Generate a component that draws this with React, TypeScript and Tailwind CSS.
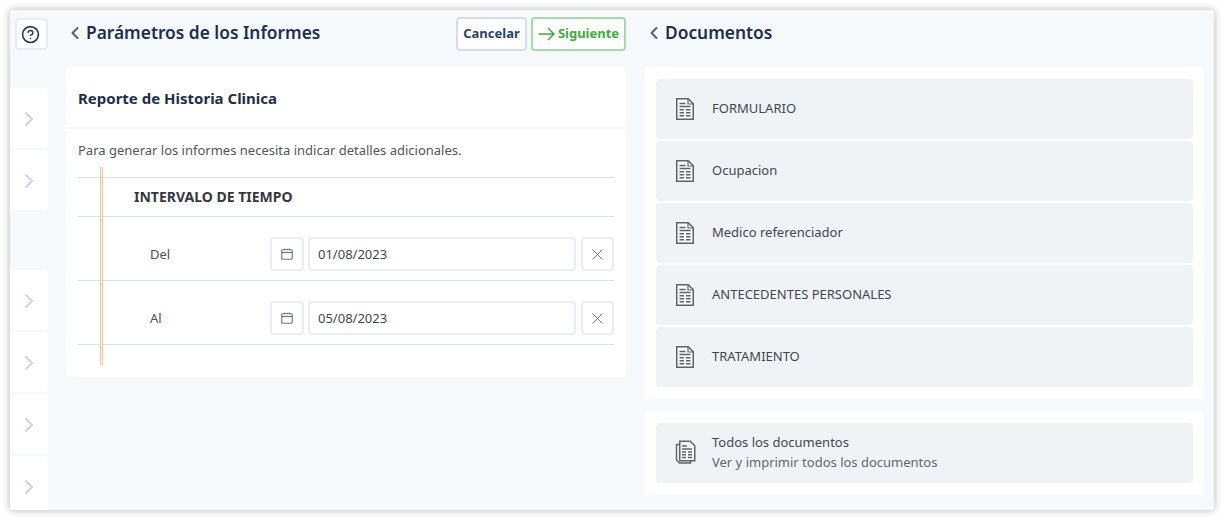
import React from "react";
import { ChevronLeft, ChevronRight, X, CircleHelp } from "lucide-react";

const DOCS = ["FORMULARIO", "Ocupacion", "Medico referenciador", "ANTECEDENTES PERSONALES", "TRATAMIENTO"];

const DocIcon = () => (
  <svg width="20" height="24" viewBox="0 0 20 24" fill="none" stroke="#5f6368" className="shrink-0">
    <path d="M1.75 1.75h11.5l5 5v15.5h-16.5z" strokeWidth="1.5" fill="#fafbfc" />
    <path d="M13 2v5h5" strokeWidth="1.2" />
    <path d="M4.5 6.5h6M4.5 9.5h11" strokeWidth="1.4" />
    <path d="M4.5 12.7h4.5M11 12.7h4.5M4.5 15.7h4.5M11 15.7h4.5M4.5 18.7h4.5M11 18.7h4.5" strokeWidth="1.6" />
  </svg>
);

const DocsIcon = () => (
  <svg width="21" height="24" viewBox="0 0 21 24" fill="none" stroke="#5f6368" className="shrink-0">
    <path d="M4 4.5H1.5v15.5l3 3h11v-2" strokeWidth="1.4" />
    <path d="M4.75 1.25h10.5l4.5 4.5v15h-15z" strokeWidth="1.5" fill="#fafbfc" />
    <path d="M7 6h5M7 9h10" strokeWidth="1.3" />
    <path d="M7 12h4M13 12h4M7 14.8h4M13 14.8h4M7 17.6h4M13 17.6h4" strokeWidth="1.5" />
  </svg>
);

const CalendarIcon = () => (
  <svg width="12" height="12" viewBox="0 0 12 12" fill="none" stroke="#6b6f73" strokeWidth="1.1">
    <rect x="0.75" y="1.75" width="10.5" height="9.5" rx="1.2" />
    <path d="M0.75 4.5h10.5" />
    <path d="M3.5 0.5v1.6M6 0.5v1.6M8.5 0.5v1.6" strokeWidth="0.9" />
  </svg>
);

const NextArrow = () => (
  <svg width="17" height="14" viewBox="0 0 17 14" fill="none" stroke="#3cae3c" strokeWidth="1.5" className="shrink-0">
    <path d="M0.5 7h15.5M10 1l6 6-6 6" />
  </svg>
);

const Tile = () => (
  <div className="flex h-[60px] w-[38px] shrink-0 items-center justify-center rounded-r bg-white pt-[2px]">
    <ChevronRight size={24} strokeWidth={2.25} className="text-[#ccd6e2]" />
  </div>
);

const DateRow = ({ label, value }: { label: string; value: string }) => (
  <div className="flex h-[64px] items-center border-b border-[#d8dfe6] pl-[72px] pt-[11px] text-[13px] text-[#4a5058]">
    <span className="w-[120px] pt-[1px]">{label}</span>
    <div className="flex h-[34px] w-[34px] items-center justify-center rounded border-2 border-[#eaeef2]">
      <CalendarIcon />
    </div>
    <div className="ml-[4px] flex h-[34px] w-[268px] items-center rounded border-2 border-[#eaeef2] pl-[8px] pt-[1px] text-[#3f4650]">
      {value}
    </div>
    <div className="ml-[5px] flex h-[34px] w-[33px] items-center justify-center rounded border-2 border-[#eaeef2]">
      <X size={19} strokeWidth={1.1} className="-ml-[1px] text-[#5f6368]" />
    </div>
  </div>
);

export default function App() {
  return (
    <div className="h-[520px] w-[1224px] bg-white p-[10px] font-['Noto_Sans',sans-serif]">
      <div className="flex h-[500px] w-[1204px] overflow-hidden bg-[#f5f9fc] shadow-[0_0_8px_rgba(0,0,0,0.3)]">
        <aside className="flex w-[38px] shrink-0 flex-col">
          <div className="ml-[5px] mt-[8px] flex h-[32px] w-[33px] shrink-0 items-center justify-center rounded border-2 border-[#e8ecf0] bg-white">
            <CircleHelp size={19} strokeWidth={2} className="-ml-[2px] text-[#1f3a5c]" />
          </div>
          <div className="mt-[38px] flex shrink-0 flex-col gap-[2px]">
            <Tile />
            <Tile />
          </div>
          <div className="mt-[60px] flex shrink-0 flex-col gap-[2px]">
            <Tile />
            <Tile />
            <Tile />
            <Tile />
          </div>
        </aside>

        <main className="ml-[18px] w-[560px] shrink-0">
          <div className="flex h-[57px] items-start justify-between">
            <div className="flex h-[45px] items-center">
              <ChevronLeft size={20} strokeWidth={2.5} className="-ml-[1px] mr-[1px] mt-[1px] text-[#4a6584]" />
              <h1 className="text-[17.33px] font-semibold text-[#1d2f4a]">Parámetros de los Informes</h1>
            </div>
            <div className="mt-[7px] flex gap-[4px]">
              <button className="flex h-[34px] w-[71px] items-center justify-center rounded border-2 border-[#d5dee8] bg-white text-[13px] font-bold text-[#274466]">
                Cancelar
              </button>
              <button className="flex h-[34px] w-[95px] items-center justify-center gap-[3px] rounded border-2 border-[#a5dba5] bg-white text-[13px] font-bold text-[#3cae3c]">
                <NextArrow />
                Siguiente
              </button>
            </div>
          </div>
          <section className="flex h-[60px] items-center rounded-t bg-white px-[12px] pt-[2px]">
            <h2 className="text-[15px] font-bold text-[#1d2f4a]">Reporte de Historia Clinica</h2>
          </section>
          <section className="relative mt-[2px] h-[248px] rounded-b bg-white px-[12px] pt-[11px]">
            <p className="text-[13px] leading-[20px] text-[#4f565e]">Para generar los informes necesita indicar detalles adicionales.</p>
            <div className="absolute bottom-[12px] left-[34px] top-[38px] w-[3px] border-x border-[#f0c48f]" />
            <div className="mt-[17px] flex h-[40px] items-center border-y border-[#d8dfe6] pb-[1px] pl-[56px] text-[14px] font-bold text-[#33383f]">
              INTERVALO DE TIEMPO
            </div>
            <DateRow label="Del" value="01/08/2023" />
            <DateRow label="Al" value="05/08/2023" />
          </section>
        </main>

        <div className="ml-[18px] w-[560px] shrink-0">
          <div className="flex h-[57px] items-start">
            <div className="flex h-[45px] items-center">
              <ChevronLeft size={20} strokeWidth={2.5} className="mt-[1px] text-[#4a6584]" />
              <h1 className="ml-[1px] text-[17.33px] font-semibold text-[#1d2f4a]">Documentos</h1>
            </div>
          </div>
          <section className="flex flex-col gap-[2px] rounded bg-white p-[12px]">
            {DOCS.map((doc) => (
              <div key={doc} className="flex h-[60px] w-[537px] items-center rounded bg-[#f0f3f6] pl-[19px] text-[13px] text-[#3f4650]">
                <DocIcon />
                <span className="ml-[17px]">{doc}</span>
              </div>
            ))}
          </section>
          <section className="mt-[12px] rounded bg-white p-[12px]">
            <div className="flex h-[60px] w-[537px] items-center rounded bg-[#f0f3f6] pb-[2px] pl-[19px] text-[13px] leading-[20px]">
              <DocsIcon />
              <div className="ml-[16px]">
                <div className="text-[#3f4650]">Todos los documentos</div>
                <div className="text-[#5f666e]">Ver y imprimir todos los documentos</div>
              </div>
            </div>
          </section>
        </div>
      </div>
    </div>
  );
}
